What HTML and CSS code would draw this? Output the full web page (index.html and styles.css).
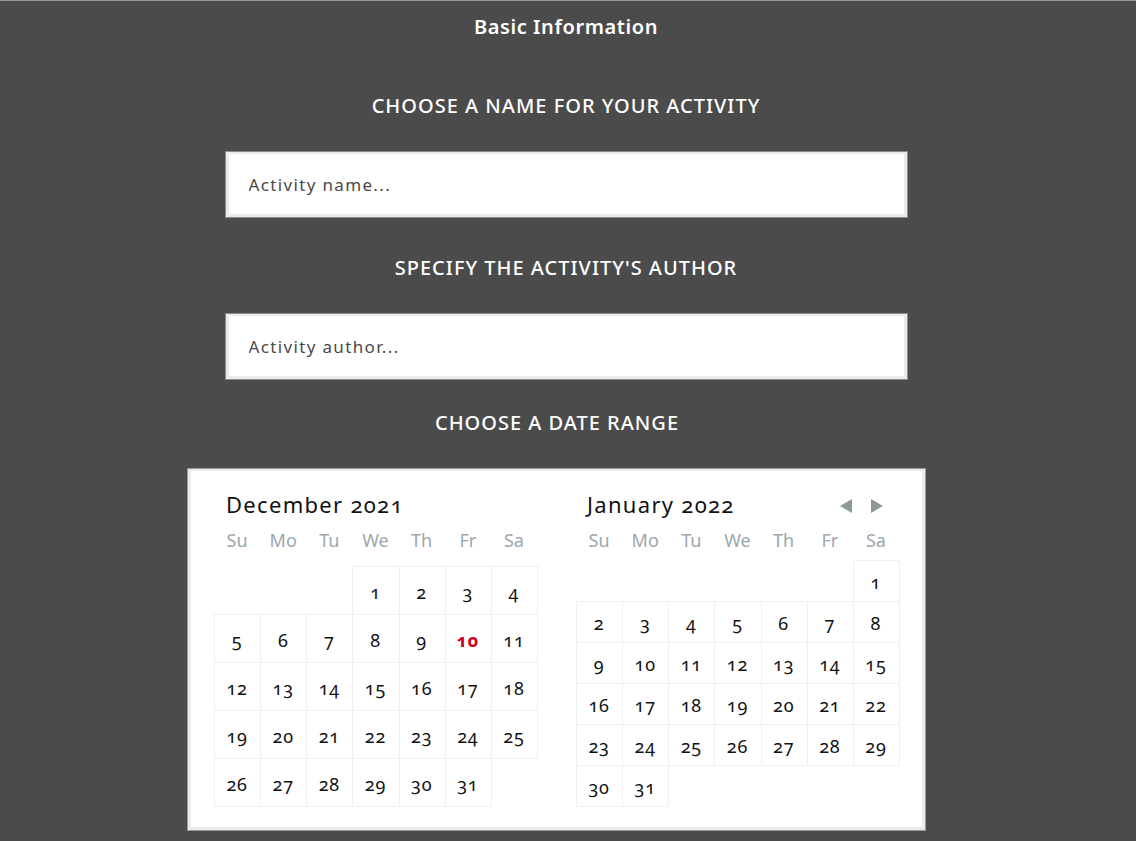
FILE: index.html
```html
<!DOCTYPE html>
<html lang="en">
<head>
<meta charset="utf-8">
<title>Basic Information</title>
<link rel="stylesheet" href="styles.css">
</head>
<body>
<div class="page">
  <h1 class="title">Basic Information</h1>

  <h2 class="label label-name">CHOOSE A NAME FOR YOUR ACTIVITY</h2>
  <div class="field"><input class="text-input" type="text" placeholder="Activity name..."></div>

  <h2 class="label label-author">SPECIFY THE ACTIVITY'S AUTHOR</h2>
  <div class="field"><input class="text-input" type="text" placeholder="Activity author..."></div>

  <h2 class="label label-date">CHOOSE A DATE RANGE</h2>

  <div class="calendar">
    <div class="month month-left">
      <div class="month-head"><span class="month-name">December 2021</span></div>
      <div class="weekdays">
        <span>Su</span><span>Mo</span><span>Tu</span><span>We</span><span>Th</span><span>Fr</span><span>Sa</span>
      </div>
      <div class="days days-5">
        <span class="empty"></span><span class="empty"></span><span class="empty"></span>
        <span class="day">1</span><span class="day">2</span><span class="day">3</span><span class="day">4</span>
        <span class="day">5</span><span class="day">6</span><span class="day">7</span><span class="day">8</span><span class="day">9</span><span class="day today">10</span><span class="day">11</span>
        <span class="day">12</span><span class="day">13</span><span class="day">14</span><span class="day">15</span><span class="day">16</span><span class="day">17</span><span class="day">18</span>
        <span class="day">19</span><span class="day">20</span><span class="day">21</span><span class="day">22</span><span class="day">23</span><span class="day">24</span><span class="day">25</span>
        <span class="day">26</span><span class="day">27</span><span class="day">28</span><span class="day">29</span><span class="day">30</span><span class="day">31</span>
      </div>
    </div>

    <div class="month month-right">
      <div class="month-head">
        <span class="month-name">January 2022</span>
        <span class="nav">
          <svg class="arrow" width="13" height="14" viewBox="0 0 13 14"><polygon points="12,0 12,14 0,7" fill="#8b9a98"/></svg>
          <svg class="arrow" width="13" height="14" viewBox="0 0 13 14"><polygon points="1,0 1,14 13,7" fill="#8b9a98"/></svg>
        </span>
      </div>
      <div class="weekdays">
        <span>Su</span><span>Mo</span><span>Tu</span><span>We</span><span>Th</span><span>Fr</span><span>Sa</span>
      </div>
      <div class="days days-6">
        <span class="empty"></span><span class="empty"></span><span class="empty"></span><span class="empty"></span><span class="empty"></span><span class="empty"></span>
        <span class="day">1</span>
        <span class="day">2</span><span class="day">3</span><span class="day">4</span><span class="day">5</span><span class="day">6</span><span class="day">7</span><span class="day">8</span>
        <span class="day">9</span><span class="day">10</span><span class="day">11</span><span class="day">12</span><span class="day">13</span><span class="day">14</span><span class="day">15</span>
        <span class="day">16</span><span class="day">17</span><span class="day">18</span><span class="day">19</span><span class="day">20</span><span class="day">21</span><span class="day">22</span>
        <span class="day">23</span><span class="day">24</span><span class="day">25</span><span class="day">26</span><span class="day">27</span><span class="day">28</span><span class="day">29</span>
        <span class="day">30</span><span class="day">31</span>
      </div>
    </div>
  </div>
</div>
</body>
</html>
```

FILE: styles.css
```css
* { box-sizing: border-box; }

html, body {
  margin: 0;
  padding: 0;
  background: #4b4b4b;
}

body {
  font-family: "Noto Sans", "Open Sans", sans-serif;
  color: #fff;
  border-top: 1px solid #9a9a9a;
  height: 841px;
  overflow: hidden;
}

.page {
  display: flex;
  flex-direction: column;
  align-items: center;
  padding-right: 4px;
}

.title {
  margin: 14px 0 0;
  font-size: 20px;
  line-height: 24px;
  font-weight: 600;
  letter-spacing: 0.6px;
}

.label {
  margin: 0;
  font-size: 20px;
  line-height: 24px;
  font-weight: 500;
  letter-spacing: 1px;
}

.label-name { margin-top: 55px; }
.label-author { margin-top: 38px; }
.label-date { margin-top: 31px; margin-right: 18px; }

.field {
  margin-top: 33px;
  width: 683px;
  height: 67px;
  padding: 1px;
  background: #8c8c8c;
}

.text-input {
  display: block;
  width: 100%;
  height: 100%;
  border: 3px solid #ebebeb;
  border-top-width: 2px;
  background: #fff;
  padding: 0 0 0 20px;
  font-family: inherit;
  font-size: 17px;
  letter-spacing: 1.35px;
  color: #444;
  outline: none;
}

.text-input::placeholder {
  color: #4a4a4a;
  opacity: 1;
}

.calendar {
  margin-top: 33px;
  margin-right: 19px;
  width: 739px;
  height: 363px;
  padding: 1px;
  background: #9a9a9a;
  display: flex;
  gap: 39px;
  position: relative;
}

.calendar::before {
  content: "";
  position: absolute;
  inset: 1px;
  border: 3px solid #ebebeb;
  border-top-width: 2px;
  background: #fff;
}

.month {
  position: relative;
  width: 323px;
  color: #111;
  font-family: "Noto Sans", sans-serif;
  font-variant-numeric: oldstyle-nums;
}

.month-left { margin-left: 26px; }

.month-head {
  display: flex;
  align-items: center;
  justify-content: space-between;
  height: 28px;
  margin-top: 21px;
}

.month-left .month-head { padding-left: 12px; }
.month-right .month-head { padding-left: 11px; padding-right: 16px; }

.month-name {
  font-size: 22px;
  letter-spacing: 1.3px;
  font-weight: 400;
}

.nav {
  display: flex;
  gap: 17px;
  margin-top: 4px;
}

.arrow { display: block; }

.weekdays {
  display: grid;
  grid-template-columns: repeat(7, 1fr);
  height: 30px;
  margin-top: 7px;
  align-items: center;
  text-align: center;
  font-size: 18px;
  color: #9ca7ad;
}

.days {
  display: grid;
  grid-template-columns: repeat(7, 1fr);
}

.days-5 {
  margin-top: 11px;
  grid-auto-rows: 48px;
}

.days-6 {
  margin-top: 5px;
  grid-auto-rows: 41px;
}

.days span {
  display: flex;
  align-items: center;
  justify-content: center;
  font-size: 18px;
  letter-spacing: 0.8px;
  padding-top: 3px;
}

.day {
  box-shadow: inset 1px 1px 0 #f0f0f0, 1px 1px 0 #f0f0f0, 1px 0 0 #f0f0f0, 0 1px 0 #f0f0f0;
}

.today {
  color: #d0021b;
  font-weight: 700;
}
```
